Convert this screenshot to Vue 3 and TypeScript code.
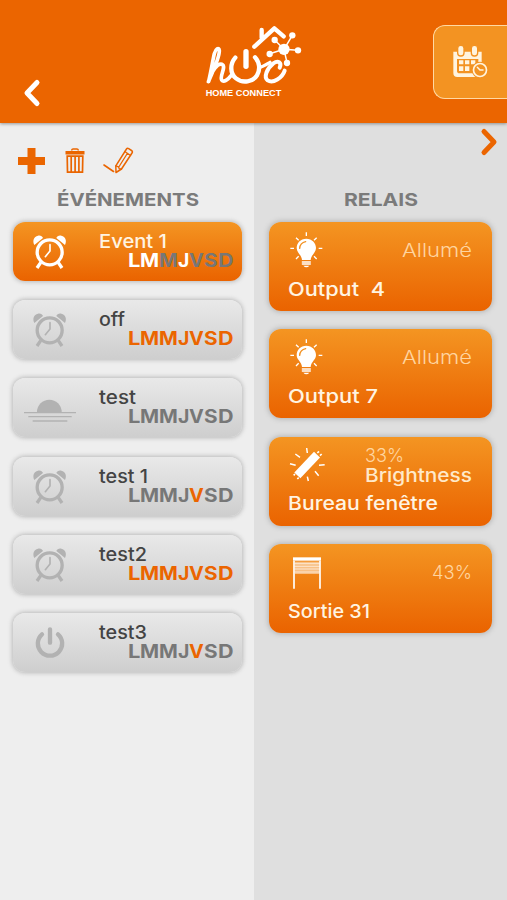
<script setup lang="ts">
import { h, type FunctionalComponent } from 'vue'

interface LabelProps {
  text: string
  width: number
}

/* Single line of text fitted to a given width; baseline sits 15px below its top. */
const FitLabel: FunctionalComponent<LabelProps> = (props) =>
  h('svg', { width: props.width, height: 20, style: { display: 'block', overflow: 'visible', flex: 'none' } }, [
    h(
      'text',
      {
        x: 0,
        y: 15,
        textLength: props.width,
        lengthAdjust: 'spacingAndGlyphs',
        fill: 'currentColor',
        style: { whiteSpace: 'pre' },
      },
      props.text,
    ),
  ])
FitLabel.props = ['text', 'width']

interface EventItem {
  name: string
  width: number
  icon: 'alarm' | 'sunset' | 'power'
  days: string
  selected?: boolean
}

interface Relay {
  name: string
  width: number
  icon: 'bulb' | 'tube' | 'blind'
  state: string
  stateWidth: number
  detail?: string
}

const week: LabelProps[] = [
  { text: 'L', width: 12.4 },
  { text: 'M', width: 19.1 },
  { text: 'M', width: 18.8 },
  { text: 'J', width: 11.4 },
  { text: 'V', width: 14.8 },
  { text: 'S', width: 13.6 },
  { text: 'D', width: 15.6 },
]

const events: EventItem[] = [
  { name: 'Event 1', width: 68, icon: 'alarm', days: '1101000', selected: true },
  { name: 'off', width: 26, icon: 'alarm', days: '1111111' },
  { name: 'test', width: 37, icon: 'sunset', days: '0000000' },
  { name: 'test 1', width: 49, icon: 'alarm', days: '0000100' },
  { name: 'test2', width: 48, icon: 'alarm', days: '1111111' },
  { name: 'test3', width: 48, icon: 'power', days: '0000100' },
]

const relays: Relay[] = [
  { name: 'Output  4', width: 97, icon: 'bulb', state: 'Allumé', stateWidth: 70 },
  { name: 'Output 7', width: 90, icon: 'bulb', state: 'Allumé', stateWidth: 70 },
  { name: 'Bureau fenêtre', width: 150, icon: 'tube', state: '33%', stateWidth: 39, detail: 'Brightness' },
  { name: 'Sortie 31', width: 82, icon: 'blind', state: '43%', stateWidth: 40 },
]
</script>

<template>
  <div class="screen">
    <header class="topbar">
      <button class="back" aria-label="Retour">
        <svg width="20" height="30" viewBox="0 0 20 30"><path d="M14 4.500 4 15l10 10.500" class="chev" /></svg>
      </button>
      <svg class="logo" width="150" height="110" viewBox="0 0 450 330">
        <g fill="none" stroke="#fff" stroke-linecap="round" stroke-linejoin="round">
          <path stroke-width="11" d="M85 215C98 186 119 142 118 122C117 110 107 116 103 131C98 153 94 180 86 214C96 182 113 158 126 163C140 169 118 199 125 210C131 219 144 209 153 197" />
          <path stroke-width="13" d="M166 143C150 161 149 190 168 205C188 221 219 216 231 196C242 178 238 156 225 142" />
          <path stroke-width="16" d="M198 125V169" />
          <path stroke-width="10" d="M237 172C248 172 260 163 270 157" />
          <path stroke-width="12" d="M299 173C306 157 294 150 280 160C261 175 250 201 263 211C279 221 307 204 314 182" />
          <path stroke-width="13" d="M223 110 283 55 311 79M245 60V83" />
          <path stroke-width="4.500" d="m312 118-28-28m28 28 25-42m-25 42 42 3m-42-3 9 40m-9-40-43 13" />
        </g>
        <g fill="#fff">
          <circle cx="312" cy="118" r="17" /><circle cx="284" cy="90" r="9.500" /><circle cx="337" cy="76" r="9.500" />
          <circle cx="354" cy="121" r="9.500" /><circle cx="321" cy="159" r="9.500" /><circle cx="269" cy="132" r="9.500" />
          <text x="77" y="257" textLength="227" lengthAdjust="spacingAndGlyphs" class="brand">HOME CONNECT</text>
        </g>
      </svg>
      <button class="schedule" aria-label="Calendrier">
        <svg width="36" height="36" viewBox="0 0 108 108">
          <path d="M1 20h85v68q0 8-9 8H13Q1 96 1 84z" fill="#fff4df" />
          <path d="M12 42h64v43H20q-8 0-8-8z" fill="#f39322" />
          <g fill="#fff4df">
            <path d="M18 46h13v12H18zm18 0h13v12H36zm18 0h13v12H54zM18 64h13v14H18zm18 0h13v14H36z" />
            <rect x="14" y="1" width="19" height="32" rx="9" stroke="#f39322" stroke-width="4" />
            <rect x="55" y="1" width="19" height="32" rx="9" stroke="#f39322" stroke-width="4" />
          </g>
          <circle cx="81" cy="75" r="25" fill="#f39322" />
          <circle cx="81" cy="75" r="19.500" fill="#f39322" stroke="#fff4df" stroke-width="5" />
          <path d="m73 67 8 8h9" fill="none" stroke="#fff4df" stroke-width="4.500" stroke-linecap="round" />
        </svg>
      </button>
    </header>

    <main class="columns">
      <section class="events">
        <div class="tools">
          <svg width="27" height="26" viewBox="0 0 27 26"><path d="M9.500 0h8v9H27v8h-9.500v9h-8v-9H0V9h9.500z" fill="#ea6500" /></svg>
          <svg width="20" height="26" viewBox="0 0 20 26" fill="none" stroke="#ea6500">
            <path d="M6.500 2.500Q7 1 8 1h4q1 0 1.500 1.500" stroke-width="1.500" />
            <path d="M.500 3h19v3.500H.500z" fill="#ea6500" stroke="none" />
            <path d="M2.200 8.200h15.600l-.3 16H2.500zM6.200 8v16m3.900-16v16m3.800-16v16" stroke-width="1.700" />
          </svg>
          <svg width="31" height="27" viewBox="0 0 31 27" fill="none" stroke="#ea6500" stroke-linejoin="round" stroke-linecap="round">
            <path d="M1 18 10.500 24.500" stroke-width="1.600" />
            <path d="M23.500 2Q24.300.8 25.700 1.700L28.500 3.500Q30 4.500 29 6L18.500 22 13 25.500 12.800 18.800z" stroke-width="1.500" />
            <path d="m21.800 4.500 5.800 4M24.300 6.500 15.800 20M12.800 18.800l2.700 1 .7 2 2.300.2" stroke-width="1.300" />
          </svg>
        </div>
        <h2><FitLabel text="ÉVÉNEMENTS" :width="142" /></h2>
        <article v-for="item in events" :key="item.name" class="event" :class="{ selected: item.selected }">
          <svg class="event-icon" width="60" height="58" viewBox="0 0 180 174" fill="none" stroke="currentColor">
            <template v-if="item.icon === 'alarm'">
              <circle cx="89" cy="91" r="37.500" stroke-width="10" />
              <path d="m62 122-11 16m64-16 11 16" stroke-width="10" />
              <path d="M90 68V87L76 104" stroke-width="5" stroke-linecap="round" />
              <g fill="currentColor" stroke="none">
                <path d="M43 69C37 56 41 44 54 41C61 39 67 43 69 48Z" />
                <path d="M135 69C141 56 137 44 124 41C117 39 111 43 109 48Z" />
              </g>
            </template>
            <template v-else-if="item.icon === 'sunset'">
              <path d="M51 102a37 37 0 0 1 74 0z" fill="currentColor" stroke="none" />
              <path d="M12 104h156M25 116h130M38 129h104" stroke-width="4" />
            </template>
            <template v-else>
              <path d="M66 64a36.500 36.500 0 1 0 48 0M90 49v40" stroke-width="13" stroke-linecap="round" />
            </template>
          </svg>
          <div class="event-text">
            <FitLabel class="event-name" :text="item.name" :width="item.width" />
            <div class="days">
              <FitLabel
                v-for="(day, i) in week"
                :key="i"
                :class="{ on: item.days[i] === '1' }"
                :text="day.text"
                :width="day.width"
              />
            </div>
          </div>
        </article>
      </section>

      <section class="relays">
        <div class="next">
          <svg width="20" height="30" viewBox="0 0 20 30"><path d="M5 4.500 15 15 5 25.500" class="chev" /></svg>
        </div>
        <h2><FitLabel text="RELAIS" :width="74" /></h2>
        <article v-for="relay in relays" :key="relay.name" class="relay">
          <div class="relay-top">
            <svg width="40" height="40" viewBox="0 0 120 120" fill="none" stroke="#fff">
              <template v-if="relay.icon === 'bulb'">
                <path d="M61 26C43 26 32 39 32 54C32 69 47 74 48 90H74C75 74 90 69 90 54C90 39 78 26 61 26Z" fill="#fff" stroke="none" />
                <path d="M41 55C42 43 49 37 59 35" stroke="#f2901f" stroke-width="4" stroke-linecap="round" />
                <path d="M49 96H73M49 102H73" stroke-width="4" stroke-linecap="round" />
                <path d="M52 107H70Q66 112 61 112T52 107Z" fill="#fff" stroke="none" />
                <path d="M61 7v11M30 23l8 8M92 23l-8 8M13 55h11M98 55h11M30 87l8-8M92 87l-8-8" stroke-width="4" />
              </template>
              <template v-else-if="relay.icon === 'tube'">
                <path d="M34 91 93 29" stroke-width="25" />
                <path d="m27 87-4 4m15 7-4 4M94 24l5-5m3 13 5-5" stroke-width="5" />
                <path d="m62 9 2 15M28 27l14 10M12 56l17 5M99 61l17-2M87 79l11 13M64 95l3 13" stroke-width="4.500" />
              </template>
              <template v-else>
                <path d="M27 29H100V66H27z" fill="#fff" fill-opacity=".48" stroke="none" />
                <path d="M25 35H102M25 43H102M25 51H102M25 60H102" stroke-width="2.500" opacity=".75" />
                <path d="M24 26V110M102 26V110" stroke-width="5" />
                <path d="M21 16H105V26H21z" fill="#fff" stroke="none" />
              </template>
            </svg>
            <div class="state" :class="{ stacked: relay.detail }">
              <FitLabel class="state-value" :text="relay.state" :width="relay.stateWidth" />
              <FitLabel v-if="relay.detail" class="state-detail" :text="relay.detail" :width="107" />
            </div>
          </div>
          <FitLabel class="relay-name" :text="relay.name" :width="relay.width" />
        </article>
      </section>
    </main>
  </div>
</template>

<style>
body {
  background: #eee;
}
</style>

<style scoped>
* {
  box-sizing: border-box;
}
.screen {
  display: flex;
  flex-direction: column;
  height: 900px;
  overflow: hidden;
  font-family: Inter, 'Open Sans', sans-serif;
  color: #444;
}
button {
  border: 0;
  padding: 0;
  background: none;
}
svg {
  display: block;
}
.topbar {
  flex: none;
  display: flex;
  justify-content: space-between;
  height: 123px;
  background: #eb6500;
  box-shadow: 0 1px 3px rgba(80, 80, 80, 0.55);
  z-index: 1;
}
.back {
  width: 87px;
  padding: 78px 0 0 23px;
  align-self: flex-start;
}
.chev {
  fill: none;
  stroke: #fff;
  stroke-width: 5;
  stroke-linecap: round;
  stroke-linejoin: round;
}
.logo {
  margin: 10px 0 0 20px;
}
.brand {
  font: 700 29px 'Liberation Sans', sans-serif;
}
.schedule {
  display: flex;
  align-items: flex-start;
  width: 74px;
  height: 74px;
  margin: 25px 0 0 30px;
  padding: 19px 0 0 19px;
  background: #f39322;
  border: 1.5px solid #ffd9a3;
  border-right: 0;
  border-radius: 12px 0 0 12px;
}
.columns {
  flex: 1;
  display: grid;
  grid-template-columns: 254px 253px;
}
.events {
  background: #eee;
  padding: 0 12px 0 13px;
}
.relays {
  background: #dfdfdf;
  padding: 0 15px;
}
.tools {
  display: flex;
  align-items: center;
  height: 68px;
  padding: 7px 0 0 5px;
  gap: 18px;
}
.tools svg:first-child {
  margin-right: 2px;
}
.next {
  height: 68px;
  padding: 4px 0 0 210px;
}
.next .chev {
  stroke: #eb6500;
}
h2 {
  display: flex;
  justify-content: center;
  margin: 0 0 11px;
  height: 20px;
  font-size: 18px;
  font-weight: 700;
  color: #7b7b7b;
}
.event {
  display: flex;
  height: 59px;
  margin-bottom: 19.2px;
  padding-left: 7px;
  border-radius: 12px;
  background: linear-gradient(#e9e9e9, #cecece);
  box-shadow: 0 0 4px 1px rgba(110, 110, 110, 0.4);
}
.event.selected {
  background: linear-gradient(#f49522, #ea6300);
}
.event-icon {
  color: #b2b2b2;
}
.selected .event-icon {
  color: #fff;
}
.event-text {
  display: flex;
  flex-direction: column;
  padding: 11px 0 0 19px;
}
.event-name {
  font-size: 18.5px;
  font-weight: 450;
}
.selected .event-name {
  color: #fff4e2;
}
.days {
  display: flex;
  margin: -1px 0 0 28.5px;
  font-size: 18.5px;
  font-weight: 700;
  color: #777;
}
.days .on {
  color: #eb6500;
}
.selected .days .on {
  color: #fff;
}
.relay {
  height: 89px;
  margin-bottom: 18.4px;
  padding: 8px 20px 0 17px;
  border-radius: 12px;
  background: linear-gradient(#f49522, #ea6300);
  box-shadow: 0 0 5px 1px rgba(110, 110, 110, 0.38);
}
.relay-top {
  display: flex;
  justify-content: space-between;
  height: 50.5px;
}
.state {
  padding-top: 12px;
}
.state.stacked {
  padding-top: 2px;
}
.state-value {
  font-size: 18.5px;
  font-weight: 300;
  color: #ffd5a0;
}
.state-detail {
  font-size: 18.5px;
  font-weight: 450;
  color: #ffe9c9;
}
.relay-name {
  margin-left: 2px;
  font-size: 18.5px;
  font-weight: 500;
  color: #fff4e2;
}
</style>
